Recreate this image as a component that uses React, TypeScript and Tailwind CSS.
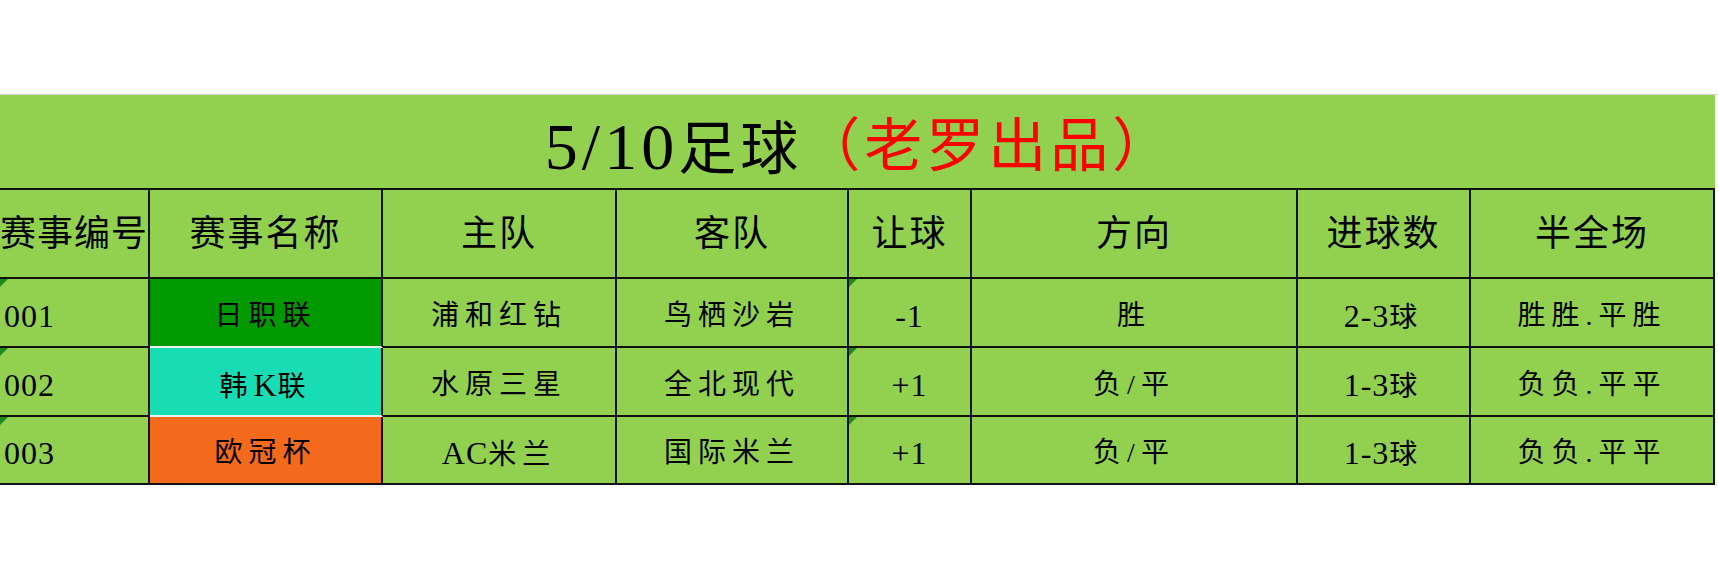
import React from "react";

const FONT = '"Liberation Serif", "Noto Sans CJK SC", serif';

type Row = {
  id: string;
  name: string;
  bg: string;
  nameBorder: string;
  home: string;
  away: string;
  hc: string;
  dir: string;
  goals: string;
  hf: string;
};

const rows: Row[] = [
  { id: "001", name: "日职联", bg: "bg-[#009a00]", nameBorder: "border-b-[#e6f2ee]", home: "浦和红钻", away: "鸟栖沙岩", hc: "-1", dir: "胜", goals: "2-3球", hf: "胜胜.平胜" },
  { id: "002", name: "韩K联", bg: "bg-[#18dcb4]", nameBorder: "border-b-[#e6f2ee]", home: "水原三星", away: "全北现代", hc: "+1", dir: "负/平", goals: "1-3球", hf: "负负.平平" },
  { id: "003", name: "欧冠杯", bg: "bg-[#f46a1c]", nameBorder: "border-b-[#111111]", home: "AC米兰", away: "国际米兰", hc: "+1", dir: "负/平", goals: "1-3球", hf: "负负.平平" },
];

const headers = ["赛事编号", "赛事名称", "主队", "客队", "让球", "方向", "进球数", "半全场"];

function Mixed({ text }: { text: string }) {
  const parts = text.split(/([A-Za-z0-9+\-]+)/).filter((p) => p !== "");
  return (
    <span>
      {parts.map((p, i) =>
        /^[A-Za-z0-9+\-]+$/.test(p) ? (
          <span key={i} className="text-[32px] tracking-[1px]">
            {p}
          </span>
        ) : (
          <span key={i}>{p}</span>
        )
      )}
    </span>
  );
}

function Tri() {
  return (
    <svg className="absolute left-0 top-0" width="8" height="8" viewBox="0 0 8 8">
      <polygon points="0,0 8,0 0,8" fill="#1e8a1e" />
    </svg>
  );
}

function Cell({
  text,
  className = "",
  tri = false,
  left = false,
}: {
  text: string;
  className?: string;
  tri?: boolean;
  left?: boolean;
}) {
  return (
    <div
      className={`relative flex items-center ${left ? "justify-start pl-[4px]" : "justify-center"} border-r-2 border-b-2 border-[#111111] pt-[6px] whitespace-nowrap text-[28px] tracking-[6px] text-black ${className}`}
    >
      {tri && <Tri />}
      <Mixed text={text} />
    </div>
  );
}

export default function App() {
  return (
    <div className="h-[573px] w-[1718px] overflow-hidden bg-white" style={{ fontFamily: FONT }}>
      <div className="h-[95px] border-b border-[#d4d4d4]" />
      <div className="grid w-[1715px] grid-cols-[150px_233px_234px_232px_123px_326px_173px_244px]">
        <div className="col-span-8 flex h-[95px] items-center justify-center border-b-2 border-[#111111] bg-[#92d050] pl-[4px] pt-[10px] text-[58px] leading-none tracking-[4px] whitespace-nowrap">
          <span className="text-black">
            <span className="text-[66px]">5/10</span>足球
          </span>
          <span className="text-[#ff0000]">（老罗出品）</span>
        </div>
        {headers.map((h, i) => (
          <div
            key={h}
            className={`flex h-[89px] items-center justify-center border-r-2 border-b-2 border-[#111111] bg-[#92d050] whitespace-nowrap text-[36px] text-black ${i === 0 ? "tracking-[1px]" : "tracking-[2px]"}`}
          >
            {h}
          </div>
        ))}
        {rows.map((r, i) => (
          <React.Fragment key={r.id}>
            <Cell className={`bg-[#92d050] ${i === 2 ? "h-[68px]" : "h-[69px]"}`} tri left text={r.id} />
            <div
              className={`flex items-center justify-center border-r-2 border-b-2 border-r-[#111111] ${r.nameBorder} ${r.bg} pt-[6px] whitespace-nowrap text-[28px] tracking-[6px] text-black`}
            >
              <Mixed text={r.name} />
            </div>
            <Cell className="bg-[#92d050]" text={r.home} />
            <Cell className="bg-[#92d050]" text={r.away} />
            <Cell className="bg-[#92d050]" tri text={r.hc} />
            <Cell className="bg-[#92d050]" text={r.dir} />
            <Cell className="bg-[#92d050]" text={r.goals} />
            <Cell className="bg-[#92d050]" text={r.hf} />
          </React.Fragment>
        ))}
      </div>
    </div>
  );
}
